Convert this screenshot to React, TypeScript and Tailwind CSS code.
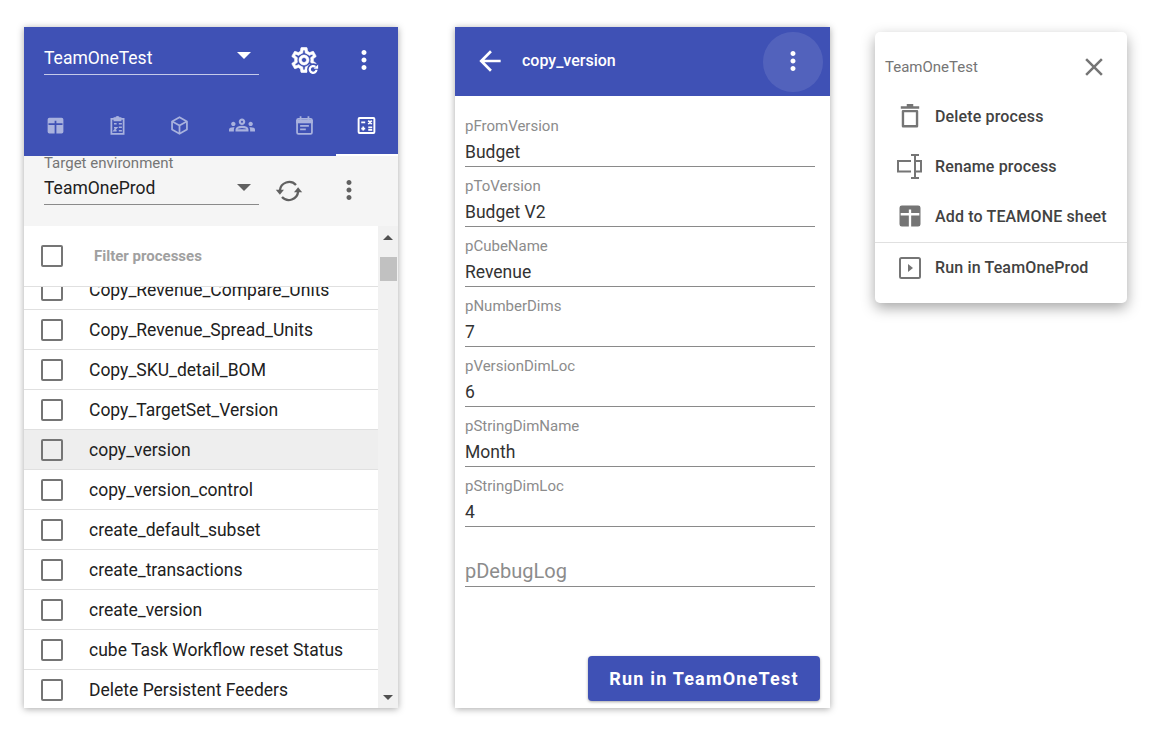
import React from "react";
import { MdArrowBack, MdMoreVert, MdClose, MdOutlineGroups } from "react-icons/md";

type P = { className?: string };

const GearRefresh = ({ className }: P) => (
  <svg viewBox="0 0 24 24" className={className}>
    <path
      fill="currentColor"
      stroke="currentColor"
      strokeWidth="0.5"
      d="M19.43 12.98c.04-.32.07-.64.07-.98 0-.34-.03-.66-.07-.98l2.11-1.65c.19-.15.24-.42.12-.64l-2-3.46c-.09-.16-.26-.25-.44-.25-.06 0-.12.01-.17.03l-2.49 1c-.52-.4-1.08-.73-1.69-.98l-.38-2.65C14.46 2.18 14.25 2 14 2h-4c-.25 0-.46.18-.49.42l-.38 2.65c-.61.25-1.17.59-1.69.98l-2.49-1c-.06-.02-.12-.03-.18-.03-.17 0-.34.09-.43.25l-2 3.46c-.13.22-.07.49.12.64l2.11 1.65c-.04.32-.07.65-.07.98 0 .33.03.66.07.98l-2.11 1.65c-.19.15-.24.42-.12.64l2 3.46c.09.16.26.25.44.25.06 0 .12-.01.17-.03l2.49-1c.52.4 1.08.73 1.69.98l.38 2.65c.03.24.24.42.49.42h4c.25 0 .46-.18.49-.42l.38-2.65c.61-.25 1.17-.59 1.69-.98l2.49 1c.06.02.12.03.18.03.17 0 .34-.09.43-.25l2-3.46c.12-.22.07-.49-.12-.64l-2.11-1.65zm-1.98-1.71c.04.31.05.52.05.73 0 .21-.02.43-.05.73l-.14 1.13.89.7 1.08.84-.7 1.21-1.27-.51-1.04-.42-.9.68c-.43.32-.84.56-1.25.73l-1.06.43-.16 1.13-.2 1.35h-1.4l-.19-1.35-.16-1.13-1.06-.43c-.43-.18-.83-.41-1.23-.71l-.91-.7-1.06.43-1.27.51-.7-1.21 1.08-.84.89-.7-.14-1.13c-.03-.31-.05-.54-.05-.74s.02-.43.05-.73l.14-1.13-.89-.7-1.08-.84.7-1.21 1.27.51 1.04.42.9-.68c.43-.32.84-.56 1.25-.73l1.06-.43.16-1.13.2-1.35h1.39l.19 1.35.16 1.13 1.06.43c.43.18.83.41 1.23.71l.91.7 1.06-.43 1.27-.51.7 1.21-1.07.85-.89.7.14 1.13zM12 8c-2.21 0-4 1.79-4 4s1.79 4 4 4 4-1.79 4-4-1.79-4-4-4zm0 6c-1.1 0-2-.9-2-2s.9-2 2-2 2 .9 2 2-.9 2-2 2z"
    />
    <circle cx="19.500" cy="19.500" r="5" fill="#3f51b5" />
    <path d="M22 19.800a2.700 2.700 0 1 1-.9-2.300" fill="none" stroke="currentColor" strokeWidth="1.800" />
    <path d="M23.300 15.500V19h-3.500z" fill="currentColor" />
  </svg>
);

const TableIcon = ({ className }: P) => (
  <svg viewBox="0 0 24 24" className={className} fill="currentColor">
    <path fillRule="evenodd" d="M5 3h14a2 2 0 0 1 2 2v14a2 2 0 0 1-2 2H5a2 2 0 0 1-2-2V5a2 2 0 0 1 2-2zm6 3.500v3H4v2h7V21h2v-9.500h7v-2h-7v-3z" />
  </svg>
);

const ClipboardIcon = ({ className }: P) => (
  <svg viewBox="0 0 24 24" className={className} fill="none" stroke="currentColor" strokeWidth="2">
    <path d="M8 4.500H5v17h14v-17h-3" />
    <path d="M8.500 6V3.500h2a1.500 1.500 0 0 1 3 0h2V6z" fill="currentColor" />
    <path d="M8 10h3M8 14.500l3 0-3 3.500h3M13.500 10H17M13.500 14h3.500M13.500 18H17" strokeWidth="1.700" />
  </svg>
);

const CubeIcon = ({ className }: P) => (
  <svg viewBox="0 0 24 24" className={className} fill="none" stroke="currentColor" strokeWidth="2" strokeLinejoin="round">
    <path d="M12 2.500l8.500 4.800v9.400L12 21.500l-8.500-4.800V7.300z" />
    <path d="M3.800 7.500L12 12l8.200-4.500M12 12v9.500" />
  </svg>
);

const CalendarIcon = ({ className }: P) => (
  <svg viewBox="0 0 24 24" className={className} fill="none" stroke="currentColor" strokeWidth="2">
    <rect x="3.500" y="4.500" width="17" height="17" rx="1.500" />
    <path d="M7.500 1.500v4M16.500 1.500v4" />
    <path d="M3.500 6.500h17v2h-17z" fill="currentColor" />
    <path d="M7 12.500h10M7 16.500h6.500" />
  </svg>
);

const CalcBoxIcon = ({ className }: P) => (
  <svg viewBox="0 0 24 24" className={className} fill="none" stroke="currentColor">
    <rect x="3" y="3.500" width="18" height="17" strokeWidth="2.200" rx="1" />
    <path strokeWidth="2" d="M6 8.500h4.500M14 6.500l4 4M18 6.500l-4 4M6 15.500h4.500M8.250 13.250v4.500M14 14h4.500M14 17h4.500" />
  </svg>
);

const SyncIcon = ({ className }: P) => (
  <svg viewBox="0 0 24 24" className={className}>
    <path d="M18 6.800A8 8 0 0 0 4.200 11.500" fill="none" stroke="currentColor" strokeWidth="2" />
    <path d="M.7 11h7l-3.500 4.300z" fill="currentColor" />
    <path d="M6 17.200a8 8 0 0 0 13.800-4.700" fill="none" stroke="currentColor" strokeWidth="2" />
    <path d="M16.300 13h7l-3.500-4.300z" fill="currentColor" />
  </svg>
);

const TrashIcon = ({ className }: P) => (
  <svg viewBox="0 0 24 24" className={className} fill="none" stroke="currentColor" strokeWidth="2.200">
    <path d="M5.500 7.500h13v14h-13z" strokeLinejoin="round" />
    <path d="M3.500 4.200h17M9 2h6" />
  </svg>
);

const RenameIcon = ({ className }: P) => (
  <svg viewBox="0 0 26 25" className={className} fill="none" stroke="currentColor" strokeWidth="2">
    <path d="M14 7H1v10.500h13" />
    <path d="M18 7h6v10.500h-6" />
    <path d="M18 1v23M14 1h8M14 24h8" />
  </svg>
);

const RunBoxIcon = ({ className }: P) => (
  <svg viewBox="0 0 24 24" className={className} fill="none" stroke="currentColor" strokeWidth="2">
    <rect x="2" y="2" width="20" height="20" rx="1.500" />
    <path d="M10 8l5 4-5 4z" fill="currentColor" stroke="none" />
  </svg>
);

const Caret = ({ className }: P) => (
  <svg viewBox="0 0 14 7" className={className} fill="currentColor">
    <path d="M0 0h14L7 7z" />
  </svg>
);

const Checkbox = () => (
  <div className="w-[22px] h-[22px] shrink-0 rounded-[2px] border-2 border-[#757575]" />
);

const rows = [
  "Copy_Revenue_Compare_Units",
  "Copy_Revenue_Spread_Units",
  "Copy_SKU_detail_BOM",
  "Copy_TargetSet_Version",
  "copy_version",
  "copy_version_control",
  "create_default_subset",
  "create_transactions",
  "create_version",
  "cube Task Workflow reset Status",
  "Delete Persistent Feeders",
];

const fields = [
  ["pFromVersion", "Budget"],
  ["pToVersion", "Budget V2"],
  ["pCubeName", "Revenue"],
  ["pNumberDims", "7"],
  ["pVersionDimLoc", "6"],
  ["pStringDimName", "Month"],
  ["pStringDimLoc", "4"],
];

const panelShadow = "shadow-[0_1px_7px_rgba(0,0,0,0.35)]";

function ProcessPanel() {
  const tabIcon = "w-[21px] h-[21px]";
  const tab = "flex items-center justify-center pb-[2px]";
  return (
    <section className={`w-[374px] h-[681px] bg-white flex flex-col overflow-hidden ${panelShadow}`}>
      <header className="h-[129px] bg-[#3f51b5] text-white flex flex-col shrink-0">
        <div className="h-[48px] flex items-start pl-5">
          <div className="w-[215px] h-[48px] border-b border-[#c5cae9] flex items-end justify-between pb-[4px] pr-[8px]">
            <span className="text-[17.5px] leading-[24px] text-white">TeamOneTest</span>
            <Caret className="w-[14px] h-[7px] mb-[11px]" />
          </div>
          <div className="w-[90px] h-[48px] flex items-end justify-center">
            <GearRefresh className="w-[30px] h-[30px]" />
          </div>
          <div className="h-[48px] flex items-end">
            <MdMoreVert className="w-[30px] h-[30px]" />
          </div>
        </div>
        <nav className="mt-auto h-[60px] grid grid-cols-6 text-[#a9b2de]">
          <div className={tab}><TableIcon className={tabIcon} /></div>
          <div className={tab}><ClipboardIcon className={tabIcon} /></div>
          <div className={tab}><CubeIcon className={tabIcon} /></div>
          <div className={tab}><MdOutlineGroups className="w-[26px] h-[26px]" /></div>
          <div className={tab}><CalendarIcon className={tabIcon} /></div>
          <div className="flex items-center justify-center border-b-2 border-white text-white"><CalcBoxIcon className={tabIcon} /></div>
        </nav>
      </header>

      <div className="h-[70px] bg-[#f5f5f5] shrink-0 flex items-start pl-5">
        <div className="w-[215px] h-[49px] border-b border-[#8a8a8a]">
          <div className="text-[15px] leading-[15px] text-[#757575]">Target environment</div>
          <div className="flex items-center justify-between pr-[8px] mt-[4px]">
            <span className="text-[17.5px] leading-[26px] text-[#212121]">TeamOneProd</span>
            <Caret className="w-[14px] h-[7px] text-[#616161] mb-[2px]" />
          </div>
        </div>
        <SyncIcon className="w-[28px] h-[28px] text-[#616161] ml-[16px] mt-[21px]" />
        <MdMoreVert className="w-[30px] h-[30px] text-[#616161] ml-[31px] mt-[19px]" />
      </div>

      <div className="flex-1 flex min-h-0">
        <div className="flex-1 flex flex-col min-w-0">
          <div className="h-[61px] shrink-0 flex items-center pl-[17px] border-b border-[#e0e0e0]">
            <Checkbox />
            <span className="ml-[31px] text-[15px] font-bold text-[#a0a0a0]">Filter processes</span>
          </div>
          <div className="flex-1 overflow-hidden">
            <div className="-mt-[17px]">
              {rows.map((r) => (
                <div
                  key={r}
                  className={`h-[40px] flex items-center pl-[17px] border-b border-[#e0e0e0] ${r === "copy_version" ? "bg-[#eeeeee]" : ""}`}
                >
                  <Checkbox />
                  <span className="ml-[26px] text-[17.5px] leading-[26px] text-[#212121] whitespace-nowrap">{r}</span>
                </div>
              ))}
            </div>
          </div>
        </div>
        <div className="w-[20px] bg-[#f1f1f1] flex flex-col items-center pt-[9px] pb-[8px]">
          <Caret className="w-[10px] h-[5px] rotate-180 text-[#505050]" />
          <div className="w-[17px] h-[24px] bg-[#c1c1c1] mt-[17px]" />
          <Caret className="w-[10px] h-[5px] mt-auto text-[#505050]" />
        </div>
      </div>
    </section>
  );
}

function DetailPanel() {
  return (
    <section className={`w-[375px] h-[681px] bg-white flex flex-col ${panelShadow}`}>
      <header className="h-[69px] bg-[#3f51b5] text-white flex items-center shrink-0 pl-[19px] pr-[7px]">
        <MdArrowBack className="w-[32px] h-[32px] mb-[2px]" />
        <span className="ml-[16px] mb-[2px] text-[16px] font-medium">copy_version</span>
        <div className="ml-auto w-[60px] h-[60px] rounded-full bg-white/10 flex items-center justify-center">
          <MdMoreVert className="w-[30px] h-[30px] mb-[2px]" />
        </div>
      </header>
      <div className="flex-1 flex flex-col pl-[10px] pr-[15px] pt-[11px] pb-[7px]">
        {fields.map(([label, value]) => (
          <div key={label} className="h-[60px] border-b border-[#8a8a8a] flex flex-col justify-end">
            <div className="text-[15px] leading-[20px] mb-[2px] text-[#8c8c8c]">{label}</div>
            <div className="text-[17.5px] leading-[28px] text-[#333333]">{value}</div>
          </div>
        ))}
        <div className="h-[60px] border-b border-[#8a8a8a] flex items-end pb-[1px]">
          <span className="text-[20px] leading-[28px] text-[#8c8c8c]">pDebugLog</span>
        </div>
        <button className="mt-auto ml-auto -mr-[5px] w-[232px] h-[45px] rounded bg-[#3f51b5] text-white text-[18px] font-bold tracking-[1.2px] shadow-[0_1px_3px_rgba(0,0,0,0.35)]">
          Run in TeamOneTest
        </button>
      </div>
    </section>
  );
}

function MenuPanel() {
  const item = "h-[50px] flex items-center text-[16px] font-medium tracking-[0.15px] text-[#424242]";
  const slot = "w-[60px] pl-[10px] flex justify-center text-[#757575]";
  return (
    <aside className="w-[252px] h-[271px] mt-[5px] rounded-[5px] bg-white shadow-[0_5px_14px_rgba(0,0,0,0.35)] flex flex-col">
      <div className="h-[50px] mt-[9px] flex items-center justify-between pl-[10px] pr-[18px] shrink-0">
        <span className="text-[15px] mt-[3px] text-[#757575]">TeamOneTest</span>
        <MdClose className="w-[30px] h-[30px] mt-[1px] text-[#757575]" />
      </div>
      <div className={item}>
        <span className={slot}><TrashIcon className="w-[26px] h-[26px]" /></span>
        <span className="mt-[2px]">Delete process</span>
      </div>
      <div className={item}>
        <span className={slot}><RenameIcon className="w-[26px] h-[25px]" /></span>
        <span className="mt-[2px]">Rename process</span>
      </div>
      <div className={item}>
        <span className={slot}><TableIcon className="w-[28px] h-[28px]" /></span>
        <span className="mt-[2px]">Add to TEAMONE sheet</span>
      </div>
      <div className={`${item} border-t border-[#e0e0e0] mt-[1px]`}>
        <span className={slot}><RunBoxIcon className="w-[24px] h-[24px]" /></span>
        Run in TeamOneProd
      </div>
    </aside>
  );
}

export default function App() {
  return (
    <div
      className="w-[1154px] h-[742px] bg-white flex items-start pl-6 pt-[27px] overflow-hidden"
      style={{ fontFamily: "Roboto, 'Liberation Sans', sans-serif" }}
    >
      <ProcessPanel />
      <div className="ml-[57px]"><DetailPanel /></div>
      <div className="ml-[45px]"><MenuPanel /></div>
    </div>
  );
}
